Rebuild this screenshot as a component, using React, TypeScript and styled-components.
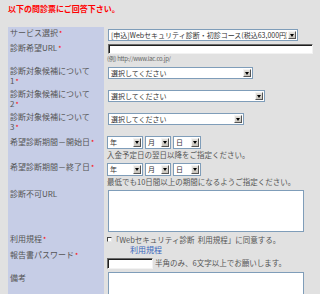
import React from 'react';
import styled, { createGlobalStyle } from 'styled-components';

const GlobalStyle = createGlobalStyle`
  html, body {
    margin: 0;
    padding: 0;
    background: #e1e1e1;
  }
`;

const Page = styled.div`
  width: 320px;
  height: 294px;
  overflow: hidden;
  padding-left: 8px;
  box-sizing: border-box;
  background: #e1e1e1;
  font-family: "Noto Sans CJK JP", "Liberation Sans", sans-serif;
`;

const Heading = styled.div`
  height: 27px;
  box-sizing: border-box;
  padding-top: 4px;
  color: #ff0000;
  font-size: 8px;
  line-height: 10px;
  font-weight: bold;
`;

const Form = styled.div`
  display: grid;
  grid-template-columns: 96px 1fr;
`;

const Label = styled.div<{ $pad?: number; $shift?: number }>`
  background: #c6cde6;
  color: #555;
  font-size: 8px;
  line-height: 10px;
  padding: ${p => p.$pad ?? 1}px 2px 2px;
  margin-top: ${p => p.$shift ?? 0}px;
`;

const Req = styled.span`
  color: #ff0000;
  font-size: 7px;
  margin-left: 1px;
`;

const Value = styled.div`
  padding: 2px 0 1px 4px;
  color: #555;
  font-size: 7.5px;
  line-height: 10px;
`;

const SelectBox = styled.div<{ $w: number; $h?: number }>`
  display: flex;
  width: ${p => p.$w}px;
  height: ${p => p.$h ?? 12}px;
  box-sizing: border-box;
  border: 1px solid #7f9db9;
  background: #fff;
  color: #333;
  font-size: 7px;
`;

const SelectText = styled.span`
  flex: 1;
  padding-left: 2px;
  line-height: 10px;
  white-space: nowrap;
  overflow: hidden;
`;

const DropButton = styled.span`
  width: 8px;
  margin: 1px;
  box-sizing: border-box;
  background: linear-gradient(#e4e2de, #c8c4bc);
  border: 1px solid;
  border-color: #f4f4f4 #555 #555 #f4f4f4;
  display: flex;
  align-items: center;
  justify-content: center;
  &::after {
    content: '';
    border-left: 2px solid transparent;
    border-right: 2px solid transparent;
    border-top: 3px solid #000;
  }
`;

const DateRow = styled.div`
  display: flex;
  gap: 2px;
  margin-left: -1px;
`;

const Hint = styled.div<{ $gap?: number; $size?: number }>`
  margin-top: ${p => p.$gap ?? 2}px;
  margin-bottom: 1px;
  margin-left: -1px;
  font-size: ${p => p.$size ?? 7.5}px;
  line-height: 8px;
  color: #555;
  white-space: nowrap;
`;

const UrlHint = styled(Hint)`
  letter-spacing: -0.3px;
  color: #666;
`;

const TextInput = styled.input<{ $w: number; $h: number }>`
  display: block;
  width: ${p => p.$w}px;
  height: ${p => p.$h}px;
  box-sizing: border-box;
  margin: 0;
  padding: 0;
  background: #fff;
  border: 1px solid;
  border-color: #6a6a6a #f2f2f2 #f2f2f2 #6a6a6a;
  box-shadow: inset 1px 1px 0 #1e1e1e;
  outline: none;
`;

const InlineInput = styled(TextInput)`
  display: inline-block;
  vertical-align: middle;
  margin: 0 2px 0 -1px;
`;

const TextArea = styled.textarea<{ $h: number }>`
  display: block;
  width: 196px;
  height: ${p => p.$h}px;
  box-sizing: border-box;
  margin: 0;
  padding: 0;
  resize: none;
  background: #fff;
  border: 1px solid #7f9db9;
  outline: none;
`;

const CheckLine = styled.div`
  white-space: nowrap;
`;

const CheckBox = styled.span`
  display: inline-block;
  width: 5px;
  height: 5px;
  box-sizing: border-box;
  margin: 0 0 0 -1px;
  background: #fff;
  border: 1px solid;
  border-color: #444 #e8e8e8 #e8e8e8 #444;
  vertical-align: 1px;
`;

const TermsLink = styled.a`
  display: block;
  padding-left: 22px;
  font-size: 8px;
  color: #3a66bd;
  text-decoration: none;
`;

const Select = ({ w, h, text }: { w: number; h?: number; text: string }) => (
  <SelectBox $w={w} $h={h}>
    <SelectText>{text}</SelectText>
    <DropButton />
  </SelectBox>
);

const DateSelects = () => (
  <DateRow>
    <Select w={36} h={13} text=" 年" />
    <Select w={26} h={13} text=" 月" />
    <Select w={28} h={13} text=" 日" />
  </DateRow>
);

export default function App() {
  return (
    <Page>
      <GlobalStyle />
      <Heading>以下の問診票にご回答下さい。</Heading>
      <Form>
        <Label>サービス選択<Req>*</Req></Label>
        <Value>
          <Select w={190} text="[申込]Webセキュリティ診断・初診コース(税込63,000円)" />
        </Value>

        <Label>診断希望URL<Req>*</Req></Label>
        <Value>
          <TextInput $w={205} $h={10} />
          <UrlHint $gap={1} $size={6}>(例) http://www.lac.co.jp/</UrlHint>
        </Value>

        <Label>診断対象候補について<br />1<Req>*</Req></Label>
        <Value>
          <Select w={145} text="選択してください" />
        </Value>

        <Label>診断対象候補について<br />2<Req>*</Req></Label>
        <Value>
          <Select w={157} text="選択してください" />
        </Value>

        <Label>診断対象候補について<br />3<Req>*</Req></Label>
        <Value>
          <Select w={136} text="選択してください" />
        </Value>

        <Label $pad={3}>希望診断期間－開始日<Req>*</Req></Label>
        <Value>
          <DateSelects />
          <Hint>入金予定日の翌日以降をご指定ください。</Hint>
        </Value>

        <Label>希望診断期間－終了日<Req>*</Req></Label>
        <Value>
          <DateSelects />
          <Hint>最低でも10日間以上の期間になるようご指定ください。</Hint>
        </Value>

        <Label>診断不可URL</Label>
        <Value>
          <TextArea $h={42} />
        </Value>

        <Label>利用規程<Req>*</Req></Label>
        <Value>
          <CheckLine>
            <CheckBox />「Webセキュリティ診断&nbsp; 利用規程」に同意する。
          </CheckLine>
          <TermsLink href="#">利用規程</TermsLink>
        </Value>

        <Label $shift={-7}>報告書パスワード<Req>*</Req></Label>
        <Value>
          <InlineInput type="password" $w={46} $h={11} />
          半角のみ、6文字以上でお願いします。
        </Value>

        <Label $pad={3}>備考</Label>
        <Value>
          <TextArea $h={44} />
        </Value>
      </Form>
    </Page>
  );
}
